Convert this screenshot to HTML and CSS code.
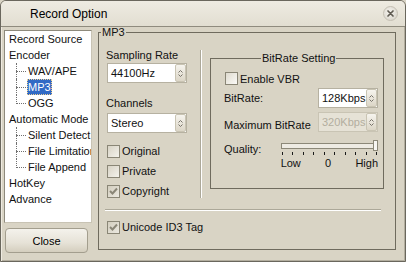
FILE: index.html
```html
<!DOCTYPE html>
<html>
<head>
<meta charset="utf-8">
<link rel="stylesheet" href="styles.css">
</head>
<body>
<div class="window">
  <div class="titlebar">
    <span class="title">Record Option</span>
    <span class="xbtn"><svg width="13" height="13" viewBox="0 0 13 13"><path d="M4 4 L9 9 M9 4 L4 9" stroke="#5f5b52" stroke-width="1.7" stroke-linecap="round"/></svg></span>
  </div>
  <div class="main">
    <div class="leftcol">
      <div class="tree">
        <div class="node">Record Source</div>
        <div class="node">Encoder</div>
        <div class="child"><span>WAV/APE</span></div>
        <div class="child"><span class="sel">MP3</span></div>
        <div class="child last"><span>OGG</span></div>
        <div class="node">Automatic Mode</div>
        <div class="child"><span>Silent Detect</span></div>
        <div class="child"><span>File Limitation</span></div>
        <div class="child last"><span>File Append</span></div>
        <div class="node">HotKey</div>
        <div class="node">Advance</div>
      </div>
      <button class="btn">Close</button>
    </div>
    <fieldset class="group mp3">
      <legend>MP3</legend>
      <div class="mp3-top">
        <div class="mp3-left">
          <div class="lbl">Sampling Rate</div>
          <div class="combo c1"><span class="val">44100Hz</span><span class="spin"><svg width="5" height="9" viewBox="0 0 5 9"><path d="M0.5 3.5 L2.5 1.5 L4.5 3.5 M0.5 5.5 L2.5 7.5 L4.5 5.5" fill="none" stroke="#77736a" stroke-width="1"/></svg></span></div>
          <div class="lbl ch">Channels</div>
          <div class="combo c2"><span class="val">Stereo</span><span class="spin"><svg width="5" height="9" viewBox="0 0 5 9"><path d="M0.5 3.5 L2.5 1.5 L4.5 3.5 M0.5 5.5 L2.5 7.5 L4.5 5.5" fill="none" stroke="#77736a" stroke-width="1"/></svg></span></div>
          <div class="checks">
            <div class="chk"><span class="box"></span>Original</div>
            <div class="chk"><span class="box"></span>Private</div>
            <div class="chk"><span class="box checked"><svg width="11" height="11" viewBox="0 0 11 11"><path d="M2 5 L4.5 7.5 L9 2.5" fill="none" stroke="#8a8677" stroke-width="2"/></svg></span>Copyright</div>
          </div>
        </div>
        <div class="vline"></div>
        <fieldset class="group bitrate">
          <legend>BitRate Setting</legend>
          <div class="br-body">
            <div class="chk vbr"><span class="box light"></span>Enable VBR</div>
            <div class="row">
              <span class="lbl">BitRate:</span>
              <div class="combo small"><span class="val">128Kbps</span><span class="spin"><svg width="5" height="9" viewBox="0 0 5 9"><path d="M0.5 3.5 L2.5 1.5 L4.5 3.5 M0.5 5.5 L2.5 7.5 L4.5 5.5" fill="none" stroke="#77736a" stroke-width="1"/></svg></span></div>
            </div>
            <div class="row max">
              <span class="lbl low">Maximum BitRate</span>
              <div class="combo small disabled"><span class="val">320Kbps</span><span class="spin"><svg width="5" height="9" viewBox="0 0 5 9"><path d="M0.5 3.5 L2.5 1.5 L4.5 3.5 M0.5 5.5 L2.5 7.5 L4.5 5.5" fill="none" stroke="#77736a" stroke-width="1"/></svg></span></div>
            </div>
            <div class="quality">
              <span class="lbl qlbl">Quality:</span>
              <div class="slider">
                <div class="track"><span class="thumb"></span></div>
                <div class="ticks"><i></i><i></i><i></i><i></i><i></i><i></i><i></i><i></i><i></i><i></i></div>
                <div class="tlabels"><span>Low</span><span>0</span><span>High</span></div>
              </div>
            </div>
          </div>
        </fieldset>
      </div>
      <div class="hr"></div>
      <div class="chk uni"><span class="box checked"><svg width="11" height="11" viewBox="0 0 11 11"><path d="M2 5 L4.5 7.5 L9 2.5" fill="none" stroke="#8a8677" stroke-width="2"/></svg></span>Unicode ID3 Tag</div>
    </fieldset>
  </div>
</div>
</body>
</html>
```
FILE: styles.css
```css
* { box-sizing: border-box; }
html, body { margin: 0; padding: 0; }
body {
  width: 406px;
  height: 262px;
  background: #d9d4c5;
  font-family: "Liberation Sans", Arial, sans-serif;
  font-size: 11px;
  color: #111;
  overflow: hidden;
}
.window {
  width: 406px;
  height: 262px;
  border: 1px solid #6a675d;
  border-radius: 6px 6px 0 0;
  background: #d9d4c5;
  box-shadow: inset 1px 1px 0 #efebe1, inset -1px -1px 0 #b3ae9f;
}
.titlebar {
  height: 26px;
  display: flex;
  align-items: center;
  justify-content: space-between;
  padding: 0 7px 0 29px;
  background: linear-gradient(#eeebe2, #e2ded1);
  border-bottom: 1px solid #8f8b7e;
  border-radius: 5px 5px 0 0;
}
.title { font-size: 12px; color: #000; }
.xbtn {
  width: 15px;
  height: 15px;
  border-radius: 50%;
  border: 1px solid #c4bfb3;
  background: radial-gradient(circle at 45% 40%, #f6f4ef, #d3cfc4);
  display: flex;
  align-items: center;
  justify-content: center;
}
.main {
  display: flex;
  padding: 0 8px 0 3px;
  gap: 6px;
}
.leftcol {
  padding-top: 3px;
  display: flex;
  flex-direction: column;
  width: 88px;
}
.tree {
  width: 88px;
  height: 193px;
  background: #fff;
  border: 1px solid #8e8a7c;
  border-right-color: #c8c3b4;
  border-bottom-color: #c8c3b4;
  padding: 0 0 0 4px;
  overflow: hidden;
  white-space: nowrap;
}
.node { line-height: 16px; height: 16px; }
.child {
  position: relative;
  margin-left: 7px;
  padding-left: 11px;
  height: 16px;
  line-height: 16px;
}
.child::before {
  content: "";
  position: absolute;
  left: 0;
  top: 8px;
  width: 10px;
  border-top: 1px dotted #707070;
}
.child::after {
  content: "";
  position: absolute;
  left: 0;
  top: 0;
  height: 16px;
  border-left: 1px dotted #707070;
}
.child.last::after { height: 9px; }
.child span { display: inline-block; padding: 0 1px; height: 16px; }
.child .sel {
  background: #316ac5;
  color: #fff;
  outline: 1px dotted #f0d090;
  outline-offset: -1px;
}
.btn {
  margin: 5px 0 0 1px;
  width: 83px;
  height: 25px;
  font-family: "Liberation Sans", Arial, sans-serif;
  font-size: 11px;
  color: #000;
  border: 1px solid #a39e8e;
  border-radius: 4px;
  background: linear-gradient(#f4f2ec, #e6e2d7 60%, #d4cebe);
  padding: 0;
}
.group {
  margin: 0;
  padding: 0;
  border: 1px solid #6f6b5e;
  min-width: 0;
}
.group legend {
  padding: 0 1px;
  line-height: 11px;
  font-size: 11px;
}
.mp3 { width: 298px; height: 223px; }
.mp3 > legend { margin-left: 2px; }
.mp3-top { display: flex; align-items: flex-start; }
.mp3-left {
  width: 101px;
  padding: 11px 0 0 7px;
}
.lbl { line-height: 13px; white-space: nowrap; }
.mp3-left .lbl.ch { margin-top: 14px; }
.combo {
  display: flex;
  width: 80px;
  height: 20px;
  margin-top: 1px;
  margin-left: 1px;
  border: 1px solid #b6b1a1;
  background: #fff;
}
.c2 { margin-top: 3px; }
.combo .val {
  flex: 1;
  padding-left: 3px;
  line-height: 18px;
  overflow: hidden;
  white-space: nowrap;
}
.combo .spin {
  width: 11px;
  height: 18px;
  border: 1px solid #c9c4b3;
  border-radius: 2px;
  background: linear-gradient(#f6f4ee, #dcd6c7);
  display: flex;
  align-items: center;
  justify-content: center;
  flex: none;
}
.combo.small { width: 60px; margin: 0; }
.combo.disabled { background: #e6e2d6; border-color: #c9c4b4; color: #b3ae9f; }
.checks { margin-top: 8px; }
.chk {
  display: flex;
  align-items: center;
  height: 20px;
  margin-left: 1px;
  white-space: nowrap;
}
.box {
  width: 13px;
  height: 13px;
  border: 1px solid #8a8676;
  background: linear-gradient(135deg, #d8d3c5, #f4f2ec);
  margin-right: 2px;
  display: flex;
  align-items: center;
  justify-content: center;
  flex: none;
}
.box.checked { background: linear-gradient(135deg, #d3cebf, #ebe8e0); }
.box.light { background: linear-gradient(135deg, #dfdbcf, #fbfaf7); }
.vline {
  margin-top: 12px;
  width: 2px;
  height: 148px;
  border-left: 1px solid #aca899;
  border-right: 1px solid #fff;
}
.bitrate {
  margin-left: 8px;
  margin-top: 15px;
  width: 174px;
  height: 136px;
}
.bitrate > legend { margin-left: 50px; }
.br-body { padding: 8px 5px 0 13px; }
.chk.vbr { height: 13px; margin-left: 1px; }
.row {
  display: flex;
  justify-content: space-between;
  align-items: center;
  height: 20px;
  margin-top: 3px;
}
.row.max { margin-top: 4px; }
.lbl.low { align-self: flex-end; }
.quality { display: flex; margin-top: 8px; }
.qlbl { width: 57px; margin-top: 3px; }
.slider { width: 98px; }
.track { position: relative; height: 11px; }
.track::before {
  content: "";
  position: absolute;
  left: 0;
  right: 1px;
  top: 3px;
  height: 4px;
  border: 1px solid #8c8878;
  background: #eeebe3;
}
.thumb {
  position: absolute;
  right: 0;
  top: 0;
  width: 5px;
  height: 11px;
  border: 1px solid #8c8878;
  background: #f7f6f2;
}
.ticks {
  display: flex;
  justify-content: space-between;
  margin-top: 1px;
  padding: 0 1px 0 1px;
  height: 3px;
}
.ticks i { width: 1px; height: 3px; background: #1a1a1a; }
.tlabels {
  display: flex;
  justify-content: space-between;
  line-height: 13px;
  margin-top: 2px;
}
.hr {
  margin: 8px 0 0 6px;
  width: 276px;
  border-top: 1px solid #aca899;
  border-bottom: 1px solid #fff;
}
.chk.uni { margin: 6px 0 0 8px; }
```
